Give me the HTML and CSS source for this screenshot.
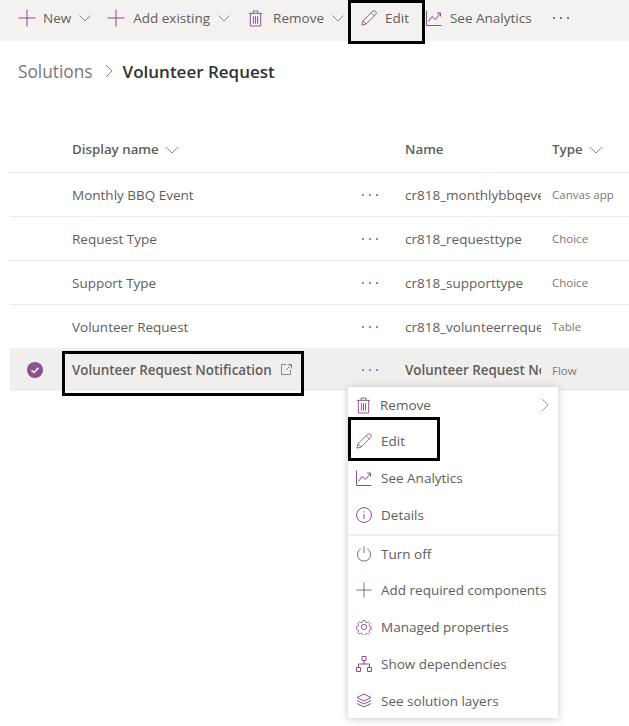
FILE: index.html
```html
<!doctype html>
<html lang="en">
<head>
    <meta charset="UTF-8">
    <title>Volunteer Request</title>
    <link rel="stylesheet" href="styles.css">
</head>
<body>
<svg class="defs" width="0" height="0">
    <symbol id="i-plus" viewBox="0 0 18 18"><path d="M9 .5v17M.5 9h17"/></symbol>
    <symbol id="i-trash" viewBox="0 0 16 18"><path d="M1 3.500h14M5.500 3.500V1h5v2.500M2.500 3.500v13.500h11V3.500M5.800 6.500v8M8 6.500v8M10.200 6.500v8"/></symbol>
    <symbol id="i-pencil" viewBox="0 0 18 18"><path d="M1 17l1.200-4.800L12.800 1.600a2 2 0 0 1 3.600 3.600L5.800 15.800zM2.200 12.200l3.600 3.600M11.500 3l3.500 3.500"/></symbol>
    <symbol id="i-chart" viewBox="0 0 16 16"><path d="M.5 .5v15h15M2.500 11.500l3.500-5 3.500 3 5-6.500M11 3h3.500v3.500"/></symbol>
    <symbol id="i-info" viewBox="0 0 16 16"><circle cx="8" cy="8" r="7.400"/><path d="M8 7v5M8 4.200v1.300"/></symbol>
    <symbol id="i-power" viewBox="0 0 16 17"><path d="M8 .5v7M4.500 3a7 7 0 1 0 7 0"/></symbol>
    <symbol id="i-gear" viewBox="0 0 18 18"><circle cx="9" cy="9" r="3"/><path d="M7.500 1h3l.5 2.300 1.600.7 2-1.300 2 2.100-1.200 2 .6 1.600 2 .6v3l-2.200.5-.7 1.600 1.300 2-2.100 2-2-1.200-1.600.6-.6 2h-3l-.5-2.200-1.600-.7-2 1.300-2-2.100 1.200-2-.6-1.600-2-.6v-3l2.200-.5.7-1.600-1.300-2 2.100-2 2 1.200 1.600-.6z" transform="translate(.9 .9) scale(.9)"/></symbol>
    <symbol id="i-tree" viewBox="0 0 16 16"><path d="M6 .5h4v4H6zM.5 11.500h4v4h-4zM11.500 11.500h4v4h-4zM8 4.500V8M2.500 11.500V8h11v3.500"/></symbol>
    <symbol id="i-layers" viewBox="0 0 16 16"><path d="M8 1l7 3.500L8 8 1 4.500zM1 7.500L8 11l7-3.500M1 10.500L8 14l7-3.500"/></symbol>
    <symbol id="i-chev" viewBox="0 0 12 7"><path d="M.5 .5L6 6 11.500 .5"/></symbol>
</svg>

<div class="toolbar">
    <div class="tool tool-new"><svg class="ico ico-18"><use href="#i-plus"/></svg><span>New</span><svg class="chev"><use href="#i-chev"/></svg></div>
    <div class="tool tool-add"><svg class="ico ico-18"><use href="#i-plus"/></svg><span>Add existing</span><svg class="chev"><use href="#i-chev"/></svg></div>
    <div class="tool tool-remove"><svg class="ico trash"><use href="#i-trash"/></svg><span>Remove</span><svg class="chev"><use href="#i-chev"/></svg></div>
    <div class="tool tool-edit"><svg class="ico ico-16"><use href="#i-pencil"/></svg><span>Edit</span><div class="mark mark-tool"></div></div>
    <div class="tool tool-see"><svg class="ico ico-16"><use href="#i-chart"/></svg><span>See Analytics</span></div>
    <div class="tool-more"><i></i><i></i><i></i></div>
</div>

<div class="crumbs">
    <span class="crumb">Solutions</span>
    <svg class="crumb-sep" viewBox="0 0 8 14"><path d="M1 1l6 6-6 6"/></svg>
    <span class="crumb-current">Volunteer Request</span>
</div>

<div class="table">
    <div class="row head">
        <div class="c-check"></div>
        <div class="c-display">Display name <svg class="chev"><use href="#i-chev"/></svg></div>
        <div class="c-dots"></div>
        <div class="c-name">Name</div>
        <div class="c-type">Type <svg class="chev"><use href="#i-chev"/></svg></div>
    </div>
    <div class="row">
        <div class="c-check"></div>
        <div class="c-display">Monthly BBQ Event</div>
        <div class="c-dots"><i></i><i></i><i></i></div>
        <div class="c-name">cr818_monthlybbqevent</div>
        <div class="c-type">Canvas app</div>
    </div>
    <div class="row">
        <div class="c-check"></div>
        <div class="c-display">Request Type</div>
        <div class="c-dots"><i></i><i></i><i></i></div>
        <div class="c-name">cr818_requesttype</div>
        <div class="c-type">Choice</div>
    </div>
    <div class="row">
        <div class="c-check"></div>
        <div class="c-display">Support Type</div>
        <div class="c-dots"><i></i><i></i><i></i></div>
        <div class="c-name">cr818_supporttype</div>
        <div class="c-type">Choice</div>
    </div>
    <div class="row">
        <div class="c-check"></div>
        <div class="c-display">Volunteer Request</div>
        <div class="c-dots"><i></i><i></i><i></i></div>
        <div class="c-name">cr818_volunteerrequest</div>
        <div class="c-type">Table</div>
    </div>
    <div class="row selected">
        <div class="c-check">
            <svg class="check" viewBox="0 0 18 18"><circle cx="9" cy="9" r="8"/><path d="M5.500 9.200l2.400 2.300 4.600-4.600"/></svg>
        </div>
        <div class="c-display">Volunteer Request Notification
            <svg class="open" viewBox="0 0 11 11"><path d="M9.500 6v4.500H.5v-10H5M6.500 .5h4v4M10.500 .5L5 6"/></svg>
            <div class="mark mark-row"></div>
        </div>
        <div class="c-dots"><i></i><i></i><i></i></div>
        <div class="c-name">Volunteer Request Notification</div>
        <div class="c-type">Flow</div>
    </div>
</div>

<div class="menu">
    <div class="item"><svg class="ico trash"><use href="#i-trash"/></svg>Remove<svg class="sub" viewBox="0 0 8 14"><path d="M1 1l6 6-6 6"/></svg></div>
    <div class="item"><svg class="ico ico-16"><use href="#i-pencil"/></svg>Edit<div class="mark mark-menu"></div></div>
    <div class="item"><svg class="ico ico-16"><use href="#i-chart"/></svg>See Analytics</div>
    <div class="item"><svg class="ico ico-16"><use href="#i-info"/></svg>Details</div>
    <div class="divider"></div>
    <div class="item"><svg class="ico ico-16"><use href="#i-power"/></svg>Turn off</div>
    <div class="item"><svg class="ico ico-16"><use href="#i-plus"/></svg>Add required components</div>
    <div class="item"><svg class="ico ico-16"><use href="#i-gear"/></svg>Managed properties</div>
    <div class="item"><svg class="ico ico-16"><use href="#i-tree"/></svg>Show dependencies</div>
    <div class="item"><svg class="ico ico-16"><use href="#i-layers"/></svg>See solution layers</div>
</div>
</body>
</html>
```

FILE: styles.css
```css
* {
    margin: 0;
    padding: 0;
    box-sizing: border-box;
}

body {
    width: 629px;
    height: 726px;
    overflow: hidden;
    position: relative;
    background: #fff;
    color: #605e5c;
    font-family: "Open Sans", "Liberation Sans", sans-serif;
    font-size: 13.500px;
}

.defs {
    position: absolute;
}

svg {
    fill: none;
    stroke: #874f8d;
    stroke-width: 1;
    flex: none;
}

.ico-18 {
    width: 18px;
    height: 18px;
}

.ico-16 {
    width: 16px;
    height: 16px;
}

.trash {
    width: 15px;
    height: 17px;
}

.chev {
    width: 12px;
    height: 7px;
    stroke: #8a8886;
}

.toolbar {
    height: 41px;
    padding: 0 0 5px 18px;
    background: #f3f2f1;
    display: flex;
    align-items: center;
}

.tool {
    display: flex;
    align-items: center;
    position: relative;
}

.tool-new {
    margin-right: 16px;
}

.tool-add {
    margin-right: 18px;
}

.tool-remove {
    margin-right: 17px;
}

.tool-edit {
    margin-right: 17px;
}

.tool span {
    margin-left: 7px;
}

.tool .chev {
    margin-left: 8px;
}

.tool-add span,
.tool-edit span,
.tool-see span {
    margin-left: 8px;
}

.tool-remove span {
    margin-left: 10px;
}

.tool-more {
    margin-left: 21px;
    display: flex;
    gap: 5px;
}

.tool-more i,
.c-dots i {
    width: 2px;
    height: 2px;
    background: #7a7775;
    display: block;
}

.crumbs {
    height: 60px;
    padding-left: 18px;
    display: flex;
    align-items: center;
}

.crumb {
    font-size: 17.300px;
    color: #7a7876;
}

.crumb-sep {
    width: 8px;
    height: 14px;
    margin: 0 10px 0 12px;
    stroke: #8a8886;
}

.crumb-current {
    font-size: 17px;
    font-weight: 600;
    color: #323130;
}

.table {
    margin: 28px 0 0 10px;
}

.row {
    height: 44px;
    display: grid;
    grid-template-columns: 62px 290px 43px 147px 1fr;
    align-items: center;
    border-bottom: 1px solid #edebe9;
}

.row > div {
    overflow: hidden;
    white-space: nowrap;
}

.row.head {
    padding-bottom: 4px;
    font-size: 13.300px;
    font-weight: 600;
}

.row.head .chev {
    margin-left: 4px;
}

.c-display {
    position: relative;
}

.row > .c-display {
    overflow: visible;
}

.row > .c-name {
    width: 136px;
}

.c-dots {
    display: flex;
    gap: 5px;
}

.c-dots i {
    background: #a77bab;
}

.c-type {
    font-size: 11.500px;
    color: #797775;
}

.row.head .c-type {
    font-size: 13.300px;
    color: #605e5c;
}

.row.selected {
    height: 43px;
    margin-top: -1px;
    padding-top: 1px;
    background: #f0efee;
    border-bottom: 0;
    font-size: 13.400px;
    font-weight: 600;
}

.selected .c-type {
    font-size: 11.500px;
    font-weight: 400;
}

.check {
    display: block;
    width: 18px;
    height: 18px;
    margin-left: 16px;
    stroke: #fff;
    stroke-width: 1.500;
}

.check circle {
    fill: #8f4f93;
    stroke: none;
}

.open {
    width: 11px;
    height: 11px;
    margin-left: 6px;
    stroke: #8a8886;
}

/* context menu opened from the selected row */
.menu {
    position: absolute;
    left: 348px;
    top: 387px;
    width: 210px;
    height: 331px;
    background: #fff;
    box-shadow: 0 1px 8px rgba(0, 0, 0, .22);
}

.item {
    height: 36.800px;
    padding: 0 0 2px 8px;
    display: flex;
    align-items: center;
    gap: 9px;
    position: relative;
}

.item:first-child {
    padding-bottom: 0;
}

.sub {
    width: 8px;
    height: 14px;
    margin-left: auto;
    margin-right: 9px;
    stroke: #a19f9d;
}

.divider {
    height: 2px;
    background: #f0efee;
}

/* black annotation boxes drawn over the screenshot */
.mark {
    position: absolute;
    border: 3px solid #000;
}

.mark-tool {
    left: -13px;
    top: -9px;
    width: 77px;
    height: 44px;
}

.mark-row {
    left: -10px;
    top: -10px;
    width: 242px;
    height: 45px;
}

.mark-menu {
    left: 0;
    top: -7px;
    width: 92px;
    height: 44px;
}
```
